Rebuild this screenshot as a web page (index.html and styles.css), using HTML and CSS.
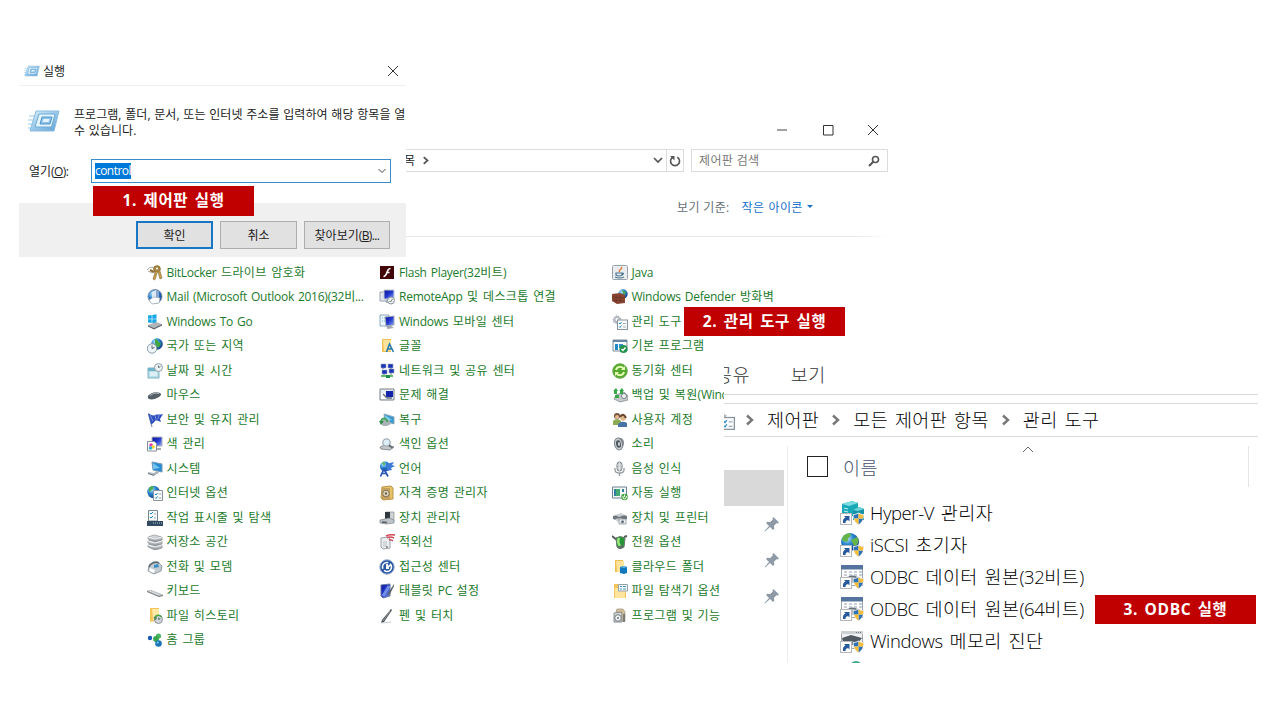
FILE: index.html
```html
<!DOCTYPE html>
<html lang="ko">
<head>
<meta charset="utf-8">
<title>ODBC 실행</title>
<link rel="stylesheet" href="styles.css">
</head>
<body>
<svg class="defs" width="0" height="0">
  <defs>
    <linearGradient id="runblue" x1="0" y1="0" x2="1" y2="1"><stop offset="0" stop-color="#d8f0fb"/><stop offset="1" stop-color="#5d9fd4"/></linearGradient>
    <radialGradient id="globe" cx=".35" cy=".3" r=".75"><stop offset="0" stop-color="#bfeaff"/><stop offset=".45" stop-color="#2a86d0"/><stop offset="1" stop-color="#123a86"/></radialGradient>
    <linearGradient id="screen" x1="0" y1="0" x2="1" y2="1"><stop offset="0" stop-color="#0a1590"/><stop offset=".5" stop-color="#2438d0"/><stop offset="1" stop-color="#8fb0f4"/></linearGradient>
    <linearGradient id="metal" x1="0" y1="0" x2="0" y2="1"><stop offset="0" stop-color="#e9ebed"/><stop offset="1" stop-color="#8c9297"/></linearGradient>
    <symbol id="run" viewBox="0 0 32 24">
      <path d="M1 7h8M0 11h8M0 15h6M0 19h5" stroke="#b9dcf2" stroke-width="1.600"/>
      <path d="M8 2h23l-5 20H2z" fill="url(#runblue)" stroke="#8abde0"/>
      <path d="M11 5h16l-3.500 13H7z" fill="#e6f5fc" stroke="#6aabd8"/>
      <path d="M14 8h10l-2 7H12z" fill="#8fc2e8" stroke="#4f94cb"/>
      <path d="M15.500 10h6l-1 3h-6z" fill="#e3f3fb"/>
    </symbol>
    <symbol id="link" viewBox="0 0 24 24">
      <rect x=".5" y="12.500" width="11" height="11" fill="#fff" stroke="#b4b8bc"/>
      <path d="M3 22c-.5-3 .5-4.500 2.500-5.500L4 15h5.500v5.500L8 19c-1.800.4-2.500 1.300-2.500 3z" fill="#2a5a9e"/>
      <path d="M18.500 11.500c2 1.300 3.500 1.500 5.500 1.500 0 5-1.500 8.500-5.500 11-4-2.500-5.500-6-5.500-11 2 0 3.500-.2 5.500-1.500z" fill="#e8eef4"/>
      <path d="M18.500 12.500v5H14c-.2-1.300-.3-2.300-.3-3.700 1.800 0 3.200-.3 4.800-1.300zM18.500 17.500H23c-.7 2.500-2 4.300-4.500 6z" fill="#2f72b8"/>
      <path d="M18.500 12.500c1.600 1 3 1.300 4.800 1.300 0 1.400-.1 2.400-.3 3.700h-4.500zM14 17.500h4.500v6c-2.500-1.700-3.800-3.500-4.500-6z" fill="#f8bd38"/>
    </symbol>
    <symbol id="odbc" viewBox="0 0 24 24">
      <rect x="1.500" y=".5" width="21" height="20" fill="#fff" stroke="#9aa5b5"/>
      <path d="M1 0h22v4.500H1z" fill="#54739f"/>
      <path d="M4 7h18M4 10h18" stroke="#8f9db4" stroke-width="1.200" stroke-dasharray="3 2"/>
      <path d="M3 14c4-4 15-4 19 0l-4 4H8z" fill="#b2b8bd"/>
      <path d="M9 12q5-2 8 1" fill="none" stroke="#697077" stroke-width="1.600"/>
    </symbol>
    <symbol id="tools" viewBox="0 0 16 16">
      <path d="M4 0l1 2 2-.5.500 2 2 .5-1 2 1 2-2-.5v2l-2-.5-1.500 1.500-1-2-2 .3.500-2-1.500-1.300L2 5 1.500 3l2-.3z" fill="#b4babf"/>
      <circle cx="5" cy="5.500" r="1.500" fill="#fff"/>
      <rect x="5.500" y="6" width="10" height="9.500" fill="#f8fafb" stroke="#87939d"/>
      <path d="M7 9l1 1 1.500-2M7 12.500l1 1 1.500-2" stroke="#2b8ac9" fill="none"/><path d="M11 9.500h3M11 13h3" stroke="#a5adb5"/>
    </symbol>
    <symbol id="pin" viewBox="0 0 16 16">
      <path d="M9.500 1L15 6.500l-1.500 1-1-.3-2.500 2.600.3 3L9 14 6 11 1 15.500.500 15 5 10 2 7l1.200-1.300 3 .3L8.800 3.500l-.3-1z" fill="#8e9aa5"/>
    </symbol>
    <symbol id="chev" viewBox="0 0 10 12"><path d="M2 1.500L7 6 2 10.500" fill="none" stroke="currentColor" stroke-width="2.400"/></symbol>
  </defs>
</svg>

<main class="stage">
  <section class="window control">
    <header class="caption">
      <svg width="12" height="12" viewBox="0 0 12 12"><path d="M1 6h10" stroke="#444"/></svg>
      <svg width="12" height="12" viewBox="0 0 12 12"><path d="M1.500 1.500h9.500V11H1.500z" fill="none" stroke="#333"/></svg>
      <svg width="12" height="12" viewBox="0 0 12 12"><path d="M1 1l10 10M11 1L1 11" stroke="#333"/></svg>
    </header>
    <div class="bar">
      <div class="address">
        <span class="crumb">목</span>
        <svg class="crumb-chev" width="8" height="9"><use href="#chev"/></svg>
        <svg class="drop" width="10" height="7" viewBox="0 0 10 7"><path d="M1 1l4 4 4-4" fill="none" stroke="#555" stroke-width="1.700"/></svg>
        <span class="reload"><svg width="12" height="12" viewBox="0 0 12 12"><path d="M3.800 2.200A4.500 4.500 0 1 0 8.300 2.200" fill="none" stroke="#555" stroke-width="1.600"/><path d="M1 1h4.500v4.500z" fill="#555"/></svg></span>
      </div>
      <div class="search"><span>제어판 검색</span>
        <svg width="12" height="12" viewBox="0 0 12 12"><circle cx="7.500" cy="4.500" r="3" fill="none" stroke="#555" stroke-width="1.600"/><path d="M5.300 6.700L1 11" stroke="#555" stroke-width="2"/></svg>
      </div>
    </div>
    <div class="viewby"><span>보기 기준:</span><span class="small-icons">작은 아이콘</span><i class="caret"></i></div>
    <div class="rule"></div>

    <div class="columns">
      <ul class="items">
        <li><svg viewBox="0 0 16 16"><path d="M0 5q4-5 9-1M1 6q4 3 7 1" fill="none" stroke="#aaa"/><circle cx="10" cy="4" r="3.300" fill="#a98642" stroke="#8d7038"/><circle cx="10" cy="3.500" r="1" fill="#fff"/><path d="M8.500 6L6 14l1.500 1 1-1.500L10 8M11 7l2 7 2-1-2-7" fill="#c6a04e" stroke="#80642f" stroke-width=".6"/><path d="M3 5l4 2" stroke="#8d6e37" stroke-width="2"/></svg><span><span class="en">BitLocker</span> 드라이브 암호화</span></li>
        <li><svg viewBox="0 0 16 16"><circle cx="8" cy="7.500" r="7" fill="url(#globe)" stroke="#8593ab"/><path d="M5 3l4-2 3 2v7H5z" fill="#dce9f5"/><path d="M9 1l3 2v7H9z" fill="#8aa6cf"/><path d="M2 11l5-3 6 1-1 5-7 1z" fill="#fff" stroke="#9eabb6" stroke-width=".7"/></svg><span class="en">Mail (Microsoft Outlook 2016)(32비...</span></li>
        <li><svg viewBox="0 0 16 16"><path d="M1 1.500L4.700 1v3.700H1zM5.300.9L9.500.3v4.400H5.300zM1 5.300h3.700V9L1 8.500zM5.300 5.300h4.200v4.300l-4.200-.5z" fill="#18a8e8"/><path d="M1 11l8-3 6 2-8 4z" fill="#b0b5b9"/><path d="M1 11l6 3v1.500l-6-3zM7 14l8-4v1.500L7 15.500z" fill="#5e656b"/></svg><span class="en">Windows To Go</span></li>
        <li><svg viewBox="0 0 16 16"><circle cx="10" cy="6" r="5.800" fill="url(#globe)"/><path d="M8 1c4 0 2 3 4 3s2 3 0 5-3-2-4-4z" fill="#43a73f"/><circle cx="5" cy="10.500" r="4.700" fill="#eef3f8" stroke="#8c9aaa"/><path d="M5 7.500v3l2.500-1" stroke="#52606f" fill="none"/></svg><span>국가 또는 지역</span></li>
        <li><svg viewBox="0 0 16 16"><path d="M1 5h11v10H1z" fill="#b8dfea" stroke="#80afbf"/><path d="M1 5h11v3H1z" fill="#6fb3ca"/><path d="M3 10h7M3 12h7" stroke="#fff"/><circle cx="11.500" cy="4.500" r="4" fill="#edf2f5" stroke="#94a0a9"/><path d="M11.500 2.500v2l2-.8" fill="none" stroke="#64717b"/></svg><span>날짜 및 시간</span></li>
        <li><svg viewBox="0 0 16 16"><path d="M1 9c2-3 8-5 12-3 2 1 1 3-2 4.500-3 2-7 2.500-9 1.500-1-.5-1.500-2-1-3z" fill="#565e66"/><path d="M3 8.500c3-2 6-3 9-2" stroke="#b8bdc1" fill="none"/></svg><span>마우스</span></li>
        <li><svg viewBox="0 0 16 16"><path d="M1.500 2l3.500 13" stroke="#8791a5" stroke-width="1.200"/><path d="M1 1c3 2 5 3 7 2s5 0 8-1l-3 5 1 3c-3-1-4-2-6-1-1 1-2 3-4 3z" fill="#2e4fc0"/><path d="M3 3l3 6M8 3l1 5M12 3l-1 4" stroke="#8fa8e2" stroke-width=".8"/></svg><span>보안 및 유지 관리</span></li>
        <li><svg viewBox="0 0 16 16"><path d="M5 1h10v9H5z" fill="url(#screen)" stroke="#aeb4be"/><path d="M8 12h6v2H8z" fill="#a6abb2"/><path d="M.5 5.500h7l2 2V15h-9z" fill="#fff" stroke="#858d98"/><circle cx="4" cy="9" r="1.800" fill="#e63ab2"/><circle cx="6" cy="11" r="1.800" fill="#ffd621"/><circle cx="3.500" cy="12" r="1.800" fill="#25b2da"/></svg><span>색 관리</span></li>
        <li><svg viewBox="0 0 16 16"><path d="M5 1l10 2v8L6 9z" fill="#278bd3" stroke="#7198b6"/><path d="M6 2l7 5-7 1z" fill="#75c4ef"/><path d="M9 10l3 1-1 2-4-1zM1 11l8 1.500-2 2-6-2z" fill="#b1b9c0"/><path d="M1 12.500l6 2 2-2" fill="none" stroke="#687985"/></svg><span>시스템</span></li>
        <li><svg viewBox="0 0 16 16"><circle cx="6.500" cy="7" r="6.200" fill="url(#globe)"/><path d="M2 3c4-4 5-1 4 1S3 5 2 8zM6 8l4-1v4l-3 2z" fill="#4eae4d"/><path d="M6.500 5.500h9v10h-9z" fill="#f8fafb" stroke="#89949e"/><path d="M8 9l1 1 1.500-2M8 12.500l1 1 1.500-2" fill="none" stroke="#1988c5"/><path d="M11.500 9h3M11.500 13h3" stroke="#9ba5ad"/></svg><span>인터넷 옵션</span></li>
        <li><svg viewBox="0 0 16 16"><path d="M1.500.5h9V11h-9z" fill="#f5f8fa" stroke="#788794"/><path d="M3 3l1 1 2-2M3 7l1 1 2-2" fill="none" stroke="#2586c0"/><path d="M7 4h2M7 8h2" stroke="#9ca7af"/><path d="M0 11h16v5H0z" fill="#324a61"/><path d="M6 13h9" stroke="#a8c2d4" stroke-dasharray="1 1"/></svg><span>작업 표시줄 및 탐색</span></li>
        <li><svg viewBox="0 0 16 16"><g fill="url(#metal)" stroke="#858b90" stroke-width=".7"><path d="M1 11l6-2 8 2v3l-7 2-7-3z"/><path d="M1 7l6-2 8 2v3l-7 2-7-3z"/><path d="M1 3l6-2 8 2v3L8 8 1 5z"/></g><path d="M1 3l7 2 7-2M1 7l7 2 7-2M1 11l7 2 7-2" fill="none" stroke="#f4f5f6"/></svg><span>저장소 공간</span></li>
        <li><svg viewBox="0 0 16 16"><path d="M4 5l7-2 4 4-1 5-7 3-6-3 1-5z" fill="#c4cbd0" stroke="#727d86" stroke-width=".7"/><path d="M2 8c1-4 6-6 10-4" fill="none" stroke="#5d6973" stroke-width="1.800"/><path d="M7 6l4-1 1 3-5 1z" fill="#3b8dc8"/><path d="M3 9l5 2-1 3-5-2z" fill="#fff"/></svg><span>전화 및 모뎀</span></li>
        <li><svg viewBox="0 0 16 16"><path d="M0 8l4-.7L16 12l-4 1.500z" fill="#c7cbce" stroke="#9ca1a5" stroke-width=".5"/><path d="M0 8.500l12 5 4-1" fill="none" stroke="#6b7277" stroke-width=".9"/><path d="M3 8.200l9 3.700" stroke="#fff" stroke-width=".8" stroke-dasharray="1 1"/></svg><span>키보드</span></li>
        <li><svg viewBox="0 0 16 16"><path d="M3 0h9v12L3 14z" fill="#f4c659"/><path d="M5 1h7v11H6z" fill="#ffe9a5"/><circle cx="11.500" cy="11.500" r="4" fill="#d2d7da" stroke="#8a949a"/><path d="M8 10c1-4 6-3 6-1" fill="none" stroke="#42a744" stroke-width="1.500"/><path d="M7 9l1 3 2-2zM11.500 9.500v2l2-.5" fill="#42a744" stroke="#5d6b71" stroke-width=".6"/></svg><span>파일 히스토리</span></li>
        <li><svg viewBox="0 0 16 16"><circle cx="3" cy="6" r="2.200" fill="#1859bb"/><circle cx="11.500" cy="4" r="2.600" fill="#4bb85e"/><circle cx="9" cy="7" r="2.900" fill="#36a84c"/><circle cx="11.500" cy="11.500" r="3.300" fill="#1876b8"/><circle cx="10.700" cy="10.500" r="1" fill="#82d2ef"/></svg><span>홈 그룹</span></li>
      </ul>
      <ul class="items">
        <li><svg viewBox="0 0 16 16"><path d="M1 1h14v13H1z" fill="#420608"/><path d="M11.500 3.500c-2 0-2.500 1-3.200 3S7 11.500 4.500 11.500M7.500 7.500h3" stroke="#fff" stroke-width="1.600" fill="none"/></svg><span><span class="en">Flash Player(32</span>비트)</span></li>
        <li><svg viewBox="0 0 16 16"><path d="M1 3h7v9H1z" fill="#e3e7ed" stroke="#99a2b1"/><path d="M5 1h10v9H5z" fill="url(#screen)" stroke="#c3c9d4"/><path d="M6 12l8-1v3H7z" fill="#aeb3ba"/><circle cx="12" cy="11.500" r="3.500" fill="#e7eaec" stroke="#8e979e"/><path d="M10.500 12l1 1 2-3" stroke="#6f8d74" fill="none"/></svg><span><span class="en">RemoteApp</span> 및 데스크톱 연결</span></li>
        <li><svg viewBox="0 0 16 16"><path d="M1 1h9v11H1z" fill="#eef6fb" stroke="#87a6bb"/><path d="M3 4h5M3 7h3" stroke="#5aaed8" stroke-dasharray="1 1"/><path d="M6 3l9-1v9l-8 1z" fill="url(#screen)" stroke="#a5acba"/><path d="M8 12h4l3 2-7 1z" fill="#a1a7af"/></svg><span><span class="en">Windows</span> 모바일 센터</span></li>
        <li><svg viewBox="0 0 16 16"><path d="M3 1h9v13H3z" fill="#efbf58"/><path d="M4 2h8v11H5z" fill="#ffe39b"/><path d="M7.500 14L10.500 6l4 8M9 11h4" fill="none" stroke="#237cae" stroke-width="1.600"/></svg><span>글꼴</span></li>
        <li><svg viewBox="0 0 16 16"><g fill="#1832b8" stroke="#9ba6bb" stroke-width=".6"><path d="M2 1h5v4H2zM9 1h5v4H9zM3 7h5v4H3zM10 6h5v4h-5z"/></g><path d="M4 5v1M12 5v1M5 11v1M12 10v2" stroke="#6c7888"/><path d="M2 13h12" stroke="#61be6d" stroke-width="2"/><path d="M7 12h4v3H7z" fill="#218c48"/></svg><span>네트워크 및 공유 센터</span></li>
        <li><svg viewBox="0 0 16 16"><path d="M1 2h14v11H1z" fill="#e8ebf0" stroke="#79818b"/><path d="M7 4h7v6H7z" fill="#1424ac"/><path d="M2 6h4v6H2z" fill="#fff"/><path d="M4 7l4 4M8 11h5" stroke="#6a727d" stroke-width="1.500"/></svg><span>문제 해결</span></li>
        <li><svg viewBox="0 0 16 16"><path d="M5 2l10 3v7L6 9z" fill="#3799cf" stroke="#86a6b9"/><path d="M6 3l7 5-6 1z" fill="#83d0ec"/><path d="M2 8h8l2 4-4 2H4l-3-3z" fill="#aab2b8"/><path d="M2 10c0-5 7-4 6 0" fill="none" stroke="#45a45d" stroke-width="2"/><path d="M0 9h5l-3 4z" fill="#398f51"/></svg><span>복구</span></li>
        <li><svg viewBox="0 0 16 16"><path d="M1 11l5-2 9 2-4 3-9-1z" fill="#c2c6c9" stroke="#8b9297"/><circle cx="7.500" cy="6.500" r="3.700" fill="#dceff8" stroke="#a3adb5" stroke-width="1.300"/><path d="M10 9l3.500 3" stroke="#697077" stroke-width="2"/></svg><span>색인 옵션</span></li>
        <li><svg viewBox="0 0 16 16"><circle cx="6" cy="5.500" r="5" fill="url(#globe)"/><path d="M3 2c3-3 4 1 2 3z" fill="#62b85e"/><path d="M7 3l8-2-2 3 3 1-4 2 1 2-5 1z" fill="#3c7bd6"/><path d="M1.500 15.500L5 8l4 7.500M3 12.500h5" fill="none" stroke="#2857b4" stroke-width="1.700"/></svg><span>언어</span></li>
        <li><svg viewBox="0 0 16 16"><path d="M3 2l9-1 2 2v11l-10 1-2-2z" fill="#e8c266" stroke="#b9954a"/><path d="M3 3h8v11H3z" fill="#c6a15b"/><circle cx="7" cy="8.500" r="3.300" fill="#e0d7bb" stroke="#7d725b"/><circle cx="7" cy="8.500" r="1.200" fill="#75694d"/></svg><span>자격 증명 관리자</span></li>
        <li><svg viewBox="0 0 16 16"><path d="M7 2h8v9H7z" fill="#cdd1d4" stroke="#858c92" stroke-width=".7"/><path d="M6 2h5v7H6z" fill="#30373d"/><path d="M1 10l9-2 5 2v3l-8 1-6-1z" fill="#bfc4c8" stroke="#7d858b" stroke-width=".7"/><path d="M3 12l5 .5" stroke="#555d63" stroke-width="1.600"/></svg><span>장치 관리자</span></li>
        <li><svg viewBox="0 0 16 16"><path d="M2 4l7-1 2 2v9l-7 1-2-2z" fill="#eceeef" stroke="#9ba1a6"/><path d="M4 7h4v6H4z" fill="#d3d7da"/><path d="M7 2q4-2 9-1M8 4q3-2 7 0M10 6q2-1 4 1" fill="none" stroke="#d24b5a" stroke-width="1.500"/><path d="M8 12v2" stroke="#4d555a"/></svg><span>적외선</span></li>
        <li><svg viewBox="0 0 16 16"><circle cx="8" cy="8" r="7.200" fill="#2856a5" stroke="#94a9cb"/><circle cx="8" cy="8" r="4.500" fill="none" stroke="#fff" stroke-width="1.600" stroke-dasharray="10 2"/><path d="M8 9V5M8 8l4-2M7 9h3" stroke="#fff" stroke-width="1.800"/></svg><span>접근성 센터</span></li>
        <li><svg viewBox="0 0 16 16"><path d="M2 2l9-1v12l-7 2-2-2z" fill="url(#screen)" stroke="#63769f"/><path d="M4 13l6-10" stroke="#9fc2f4" opacity=".6" stroke-width="3"/><path d="M15 1L9 10l-1 3 3-2 4-8z" fill="#59646e"/></svg><span>태블릿 <span class="en">PC</span> 설정</span></li>
        <li><svg viewBox="0 0 16 16"><path d="M12 1l1 1-8 12-3 1 1-3z" fill="#42494e"/><path d="M11 3l-7 10" stroke="#bec6cb" stroke-width=".7"/><path d="M2 15l10-1" stroke="#c7cdd0"/></svg><span>펜 및 터치</span></li>
      </ul>
      <ul class="items">
        <li><svg viewBox="0 0 16 16"><rect x=".5" y=".5" width="15" height="14" rx="1" fill="#e9edf0" stroke="#9ba4ac"/><path d="M9 2c3 2-4 3-1 5" fill="none" stroke="#df7638" stroke-width="1.300"/><path d="M4 8h6v2q-3 2-6 0zM10 8q3 0 0 2M3 12q5 2 9 0" fill="none" stroke="#47738c" stroke-width="1.200"/></svg><span class="en">Java</span></li>
        <li><svg viewBox="0 0 16 16"><circle cx="11" cy="5" r="4.700" fill="url(#globe)"/><path d="M10 1l4 2-2 4" fill="#49a951"/><path d="M0 5l8-1 5 2v8l-8 1-5-3z" fill="#8a4533"/><path d="M0 8l12 1M1 11l11 1M4 5v9M8 6v8" stroke="#673226" stroke-width=".7"/></svg><span><span class="en">Windows Defender</span> 방화벽</span></li>
        <li><svg><use href="#tools"/></svg><span>관리 도구</span></li>
        <li><svg viewBox="0 0 16 16"><path d="M1 2h14v11H1z" fill="#f6f8f9" stroke="#7d8d99"/><path d="M1 2h14v2H1z" fill="#6785a2"/><path d="M3 6h3v6H3z" fill="#238ac7"/><path d="M7 6h4v4H7z" fill="#2c93cf"/><circle cx="11.500" cy="11" r="4" fill="#239348"/><path d="M9.500 11l1.500 1.500 2.500-3" fill="none" stroke="#fff" stroke-width="1.400"/></svg><span>기본 프로그램</span></li>
        <li><svg viewBox="0 0 16 16"><circle cx="8" cy="8" r="7.300" fill="#54a82d" stroke="#71ad50"/><path d="M4 7c1-4 6-4 8-1M12 9c-1 4-6 4-8 1" fill="none" stroke="#e6ffb5" stroke-width="2"/><path d="M13 3v4H9zM3 13V9h4z" fill="#e6ffb5"/></svg><span>동기화 센터</span></li>
        <li><svg viewBox="0 0 16 16"><path d="M4 8l8-3 4 4v4l-8 2-6-3z" fill="#c3c8cb" stroke="#7b8388" stroke-width=".7"/><circle cx="12" cy="9" r="2.500" fill="#f3f6f7" stroke="#788288"/><path d="M1 4l3-3 2 3H5v3H2V4zM7 4l3-3 2 3h-1v3H8V4zM3 8h4v3H3z" fill="#37a94a"/></svg><span>백업 및 복원<span class="en">(Windows 7)</span></span></li>
        <li><svg viewBox="0 0 16 16"><circle cx="5" cy="4" r="3" fill="#765239"/><path d="M1 13V9q4-4 8 0v4z" fill="#8cab53"/><circle cx="11" cy="6" r="2.800" fill="#e0b68b"/><path d="M8 5q3-5 6 1" stroke="#664128" stroke-width="2" fill="none"/><path d="M6 15v-3q4-4 9-1v4z" fill="#4774a4"/><circle cx="5" cy="5" r="2" fill="#e5ba93"/></svg><span>사용자 계정</span></li>
        <li><svg viewBox="0 0 16 16"><path d="M5 2q7-1 7 5 0 5-5 7z" fill="#848b90"/><ellipse cx="6.500" cy="8" rx="4" ry="6" transform="rotate(-12 6.500 8)" fill="#c8cccf" stroke="#7b8389"/><ellipse cx="6.500" cy="8" rx="2.400" ry="3.800" transform="rotate(-12 6.500 8)" fill="#50595f"/><ellipse cx="7" cy="8" rx="1" ry="2" fill="#d6dcdf"/></svg><span>소리</span></li>
        <li><svg viewBox="0 0 16 16"><rect x="5" y="1" width="5" height="9" rx="2.500" fill="#bfc4c8" stroke="#7a8287"/><path d="M3 7v2q0 3 4.500 3T12 9V7M7.500 12v3" fill="none" stroke="#929a9f" stroke-width="1.300"/><path d="M5 4h5M5 7h5M7.500 1v9" stroke="#edf0f1" stroke-width=".6"/></svg><span>음성 인식</span></li>
        <li><svg viewBox="0 0 16 16"><path d="M.5 2h14v11H.5z" fill="#f5f8fa" stroke="#70818f"/><path d="M2 4h6v7H2z" fill="#307f9c"/><path d="M4 4h4v7H4z" fill="#43aa74"/><path d="M11 4v3" stroke="#307f9c" stroke-width="2"/><circle cx="12.500" cy="12" r="3.300" fill="#43a63a"/><path d="M12.500 9.500v2.500M11 11q-.5 3 1.500 3t2-3" fill="none" stroke="#fff"/></svg><span>자동 실행</span></li>
        <li><svg viewBox="0 0 16 16"><path d="M1 6l8-2 6 2v3l-8 2-6-2z" fill="#6f777d"/><path d="M3 5l6-2 4 2-6 2zM3 9l6-1 3 2-6 2z" fill="#c9ced1"/><path d="M7 9h7v5H7z" fill="#e9ecee" stroke="#818a90" stroke-width=".7"/><circle cx="10.500" cy="11.700" r="1.500" fill="#68747d"/></svg><span>장치 및 프린터</span></li>
        <li><svg viewBox="0 0 16 16"><path d="M0 2l5 4M12 3l3-1" stroke="#545d58" stroke-width="2"/><path d="M4 4q4-3 9 0l-1 9q-4 3-7 0z" fill="#28973a" stroke="#6b766e"/><path d="M7 4q-2 4 1 8" stroke="#96e77e" stroke-width="2.500" fill="none"/><path d="M5 13l6-2v3l-4 1z" fill="#626b67"/></svg><span>전원 옵션</span></li>
        <li><svg viewBox="0 0 16 16"><path d="M3 1h8v12H3z" fill="#eebd4e"/><path d="M4 2h8v11H5z" fill="#ffe39a"/><path d="M8 8l4-1 3 1v6l-3 1-4-1z" fill="#1377bb"/><path d="M8 8l4 1 3-1-3-1z" fill="#63b8e4"/></svg><span>클라우드 폴더</span></li>
        <li><svg viewBox="0 0 16 16"><path d="M2 1h6v3h6v11H2z" fill="#f0c45c"/><path d="M3 5h10v10H3z" fill="#ffe49e"/><path d="M6.500 1.500h9V8h-9z" fill="#f8fbfd" stroke="#94a2ad"/><path d="M8 3.500h2M11 3.500h3M8 6h2M11 6h3" stroke="#4293c5"/></svg><span>파일 탐색기 옵션</span></li>
        <li><svg viewBox="0 0 16 16"><path d="M2 5l8-1v10H2z" fill="#d5d8da" stroke="#858c90"/><path d="M5 1h6l2 3v9h-3V4H4z" fill="#d5c19b" stroke="#9a917a" stroke-width=".7"/><circle cx="6" cy="10" r="3.300" fill="#eef1f3" stroke="#737b81"/><circle cx="6" cy="10" r="1" fill="#69737a"/><path d="M12 6v8" stroke="#686f73" stroke-width="1.600"/></svg><span>프로그램 및 기능</span></li>
      </ul>
    </div>
  </section>

  <section class="window dialog">
    <header class="dialog-title"><svg class="run-small"><use href="#run"/></svg><span>실행</span>
      <svg class="dialog-close" width="12" height="12" viewBox="0 0 12 12"><path d="M1 1l10 10M11 1L1 11" stroke="#333"/></svg>
    </header>
    <div class="dialog-info"><svg class="run-large"><use href="#run"/></svg>
      <p>프로그램, 폴더, 문서, 또는 인터넷 주소를 입력하여 해당 항목을 열<br>수 있습니다.</p>
    </div>
    <div class="open-row"><label>열기<span class="key">(<u>O</u>):</span></label>
      <div class="combo"><span class="selected">control</span><svg width="8" height="6" viewBox="0 0 8 6"><path d="M.5 1L4 4.500 7.500 1" fill="none" stroke="#444"/></svg></div>
    </div>
    <footer class="actions"><button class="btn primary">확인</button><button class="btn">취소</button><button class="btn wide">찾아보기<span class="key">(<u>B</u>)...</span></button></footer>
  </section>

  <section class="window explorer">
    <nav class="tabs"><span>공유</span><span>보기</span></nav>
    <div class="path">
      <svg class="path-icon"><use href="#tools"/></svg>
      <svg class="sep"><use href="#chev"/></svg><span>제어판</span>
      <svg class="sep"><use href="#chev"/></svg><span>모든 제어판 항목</span>
      <svg class="sep"><use href="#chev"/></svg><span>관리 도구</span>
    </div>
    <div class="body">
      <aside class="side"><div class="current"></div>
        <svg><use href="#pin"/></svg><svg><use href="#pin"/></svg><svg><use href="#pin"/></svg>
      </aside>
      <div class="content">
        <div class="heading"><i class="check"></i><span>이름</span><svg width="12" height="7" viewBox="0 0 12 7"><path d="M1 6l5-5 5 5" fill="none" stroke="#666"/></svg></div>
        <ul class="files">
          <li><svg viewBox="0 0 24 24"><path d="M2 3l10-3 6 2v13H2z" fill="#18a8b8"/><path d="M2 3l7 2 9-3-6-2z" fill="#7fdce2"/><path d="M4 7l4 1M4 10l4 1" stroke="#c5f5f7"/><path d="M13 9l6-3 5 2v11H13z" fill="#1793a5"/><path d="M13 9l5 1 6-2-5-2z" fill="#6ed4da"/><use href="#link"/></svg><span><span class="en">Hyper-V</span> 관리자</span></li>
          <li><svg viewBox="0 0 24 24"><circle cx="10" cy="9" r="9" fill="url(#globe)"/><path d="M3 3c5-4 8-3 8-1s-4 3-3 5-4 2-6 0zM11 7l6-3c3 4 1 8-3 9z" fill="#65b54b"/><use href="#link"/></svg><span><span class="en">iSCSI</span> 초기자</span></li>
          <li><svg viewBox="0 0 24 24"><use href="#odbc"/><use href="#link"/></svg><span><span class="en">ODBC</span> 데이터 원본<span class="en">(32</span>비트)</span></li>
          <li><svg viewBox="0 0 24 24"><use href="#odbc"/><use href="#link"/></svg><span><span class="en">ODBC</span> 데이터 원본<span class="en">(64</span>비트)</span></li>
          <li><svg viewBox="0 0 24 24"><path d="M1.500 2.500h21v17h-21z" fill="#f0f2f3" stroke="#a0a7ac"/><path d="M1 2h22v3H1z" fill="#cbd0d3"/><path d="M16 3.500h5" stroke="#727c83" stroke-dasharray="1 1"/><path d="M2 9l9-3 11 3-4 5-8-2-7 1z" fill="#515a60"/><path d="M5 12l8 1v3H5z" fill="#858d92"/><use href="#link"/></svg><span><span class="en">Windows</span> 메모리 진단</span></li>
          <li><svg viewBox="0 0 24 24"><circle cx="16" cy="6.500" r="6.500" fill="#43a982"/></svg></li>
        </ul>
      </div>
    </div>
  </section>

  <div class="callout step1">1. 제어판 실행</div>
  <div class="callout step2">2. 관리 도구 실행</div>
  <div class="callout step3">3. ODBC 실행</div>
</main>
</body>
</html>
```

FILE: styles.css
```css
* { box-sizing: border-box; }
body { margin: 0; background: #fff; font-family: "Open Sans", "Noto Sans CJK KR", sans-serif; font-size: 12px; color: #222; }
ul { margin: 0; padding: 0; list-style: none; }
svg { display: block; flex: none; }
.defs { position: absolute; }
.stage { position: relative; width: 1280px; height: 720px; overflow: hidden; }
.window { position: absolute; background: #fff; overflow: hidden; white-space: nowrap; }

.control { left: 19px; top: 110px; width: 869px; height: 552px; letter-spacing: .35px; }
.caption { display: flex; justify-content: flex-end; align-items: center; gap: 33.500px; height: 39px; padding-right: 9px; }
.bar { display: flex; gap: 7px; height: 23px; }
.address { display: flex; align-items: center; width: 665px; border: 1px solid #dcdcdc; padding-left: 384px; }
.crumb { width: 18px; line-height: 21px; }
.crumb-chev { color: #555; }
.drop { margin-left: auto; margin-right: 3px; }
.reload { display: grid; place-items: center; width: 17px; height: 21px; border-left: 1px solid #dcdcdc; }
.search { display: flex; align-items: center; justify-content: space-between; width: 197px; border: 1px solid #dcdcdc; padding: 0 7px; line-height: 20px; color: #777; }
.viewby { display: flex; align-items: center; height: 64px; padding: 5px 0 0 658px; color: #667078; }
.small-icons { margin-left: 12px; color: #1670cc; word-spacing: .8px; }
.caret { margin-left: 4px; border: 3px solid transparent; border-top-color: #1670cc; border-bottom: 0; }
.rule { height: 1px; background: linear-gradient(90deg, #e4e7ea 96%, #fff); }
.columns { display: grid; grid-template-columns: 232.500px 232.500px 232.500px; padding: 23.500px 0 0 127.500px; color: #1c7a2b; word-spacing: 1.100px; }
.items li { display: flex; align-items: center; gap: 4px; height: 24.500px; line-height: 24px; }
.items svg { width: 16px; height: 16px; }
.items .en { letter-spacing: -.25px; }

.dialog { left: 19px; top: 57px; width: 387px; height: 200px; display: flex; flex-direction: column; }
.dialog-title { display: flex; align-items: center; height: 29px; padding: 0 7px 0 5px; border-bottom: 1px solid #f0f0f0; }
.run-small { width: 16px; height: 12px; margin-right: 3px; }
.dialog-close { margin-left: auto; }
.dialog-info { display: flex; height: 67px; padding: 20px 0 0 9px; }
.run-large { width: 32px; height: 24px; margin-top: 3px; }
.dialog-info p { margin: 1px 0 0 14px; line-height: 16px; letter-spacing: .04px; word-spacing: .6px; }
.key { letter-spacing: -.6px; }
.open-row { display: flex; align-items: center; height: 50px; padding: 0 15px 14px 10px; }
.open-row label { width: 62px; }
.combo { display: flex; flex: 1; align-items: center; justify-content: space-between; height: 24px; padding: 0 4px 0 3px; border: 1px solid #3c8ccc; }
.selected { height: 16px; line-height: 16px; background: #0078d7; color: #fff; letter-spacing: -.55px; }
.actions { display: flex; flex: 1; gap: 7px; padding: 18px 16px 8px 117px; background: #f0f0f0; }
.btn { width: 77px; padding: 0; border: 1px solid #adadad; background: #e1e1e1; font: inherit; color: #222; }
.primary { border: 2px solid #1976c5; }
.wide { width: 86px; }

.explorer { left: 724px; top: 350px; width: 534px; height: 313px; font-size: 18.500px; font-weight: 300; color: #000; letter-spacing: .4px; word-spacing: 1.600px; }
.tabs { display: flex; gap: 41px; height: 45px; margin-left: -9px; padding-top: 5px; border-bottom: 1px solid #d9d9d9; line-height: 40px; color: #333; }
.path { display: flex; align-items: center; height: 34px; margin-top: 8px; border: solid #d9d9d9; border-width: 1px 0; line-height: 32px; }
.path-icon { width: 20px; height: 20px; margin-left: -9px; }
.sep { width: 10px; height: 12px; margin: 0 12px 0 10px; color: #777; }
.path span + .sep { margin-left: 12px; }
.body { display: flex; padding-top: 9px; }
.side { display: flex; flex-direction: column; width: 64px; height: 217px; border-right: 1px solid #ececec; }
.side .current { width: 60px; height: 36px; margin: 24px 0 10px; background: #d9d9d9; }
.side svg { width: 16px; height: 16px; margin: 0 0 20px 40px; }
.content { flex: 1; }
.heading { display: flex; align-items: center; width: 461px; height: 41px; padding-left: 19px; border-right: 1px solid #e4e4e4; color: #44546c; }
.check { width: 21px; height: 21px; margin-right: 15px; border: 1px solid #222; }
.heading svg { margin: -34px 0 0 144px; }
.files { padding: 10px 0 0 52px; }
.files li { display: flex; align-items: center; gap: 6px; height: 32px; line-height: 32px; }
.files svg { width: 24px; height: 24px; }
.files .en { letter-spacing: -.4px; }

.callout { position: absolute; width: 161px; height: 29px; background: #c00000; color: #fff; font-size: 15.500px; font-weight: 700; line-height: 29px; letter-spacing: .6px; word-spacing: 2px; text-align: center; white-space: nowrap; }
.step1 { left: 93px; top: 186px; height: 30px; }
.step2 { left: 684px; top: 307px; }
.step3 { left: 1095px; top: 595px; }
```
